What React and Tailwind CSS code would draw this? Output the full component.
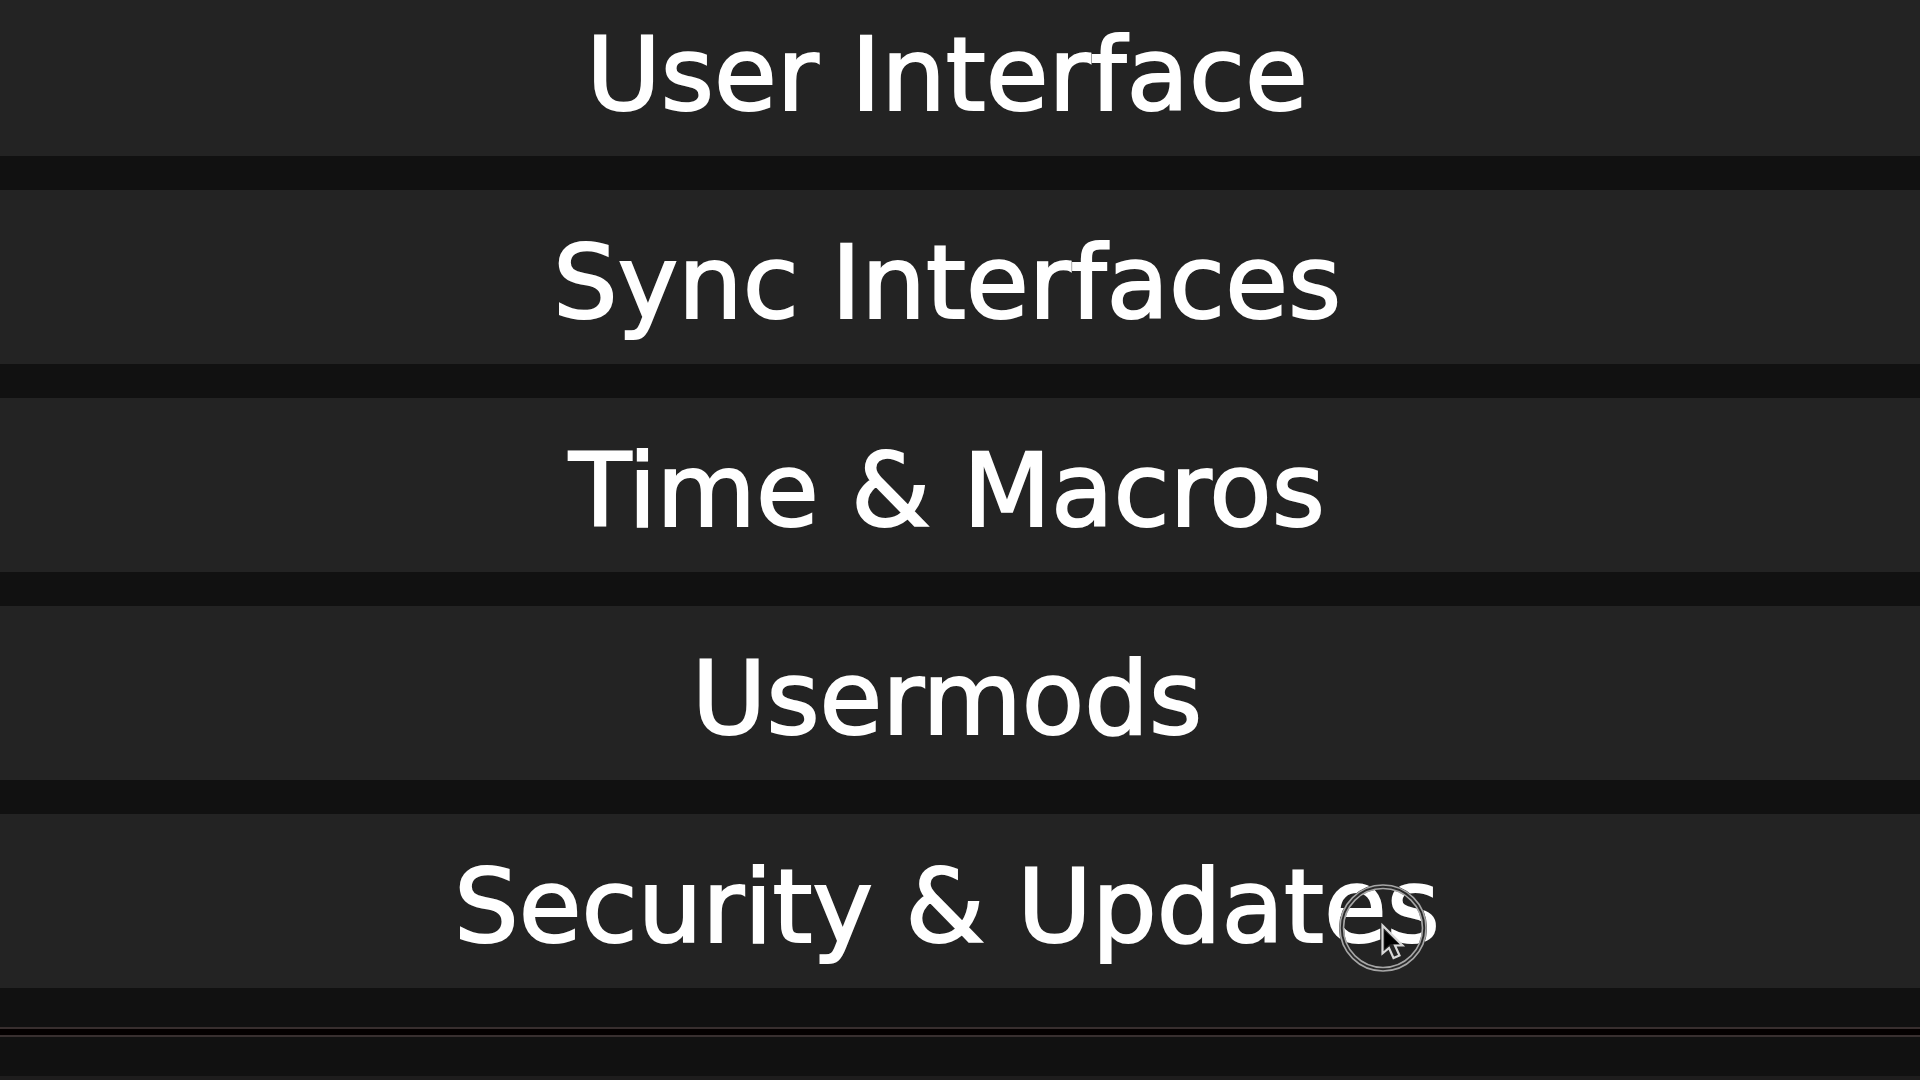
const items = [
  'User Interface',
  'Sync Interfaces',
  'Time & Macros',
  'Usermods',
  'Security & Updates',
];

function Pointer() {
  return (
    <svg
      className="pointer-events-none absolute left-[1337px] top-[882px] h-[92px] w-[92px]"
      viewBox="0 0 92 92"
      fill="none"
      aria-hidden="true"
    >
      <circle cx="46" cy="46" r="41.5" stroke="#2a2a2a" strokeWidth="5" />
      <circle cx="46" cy="46" r="43" stroke="#a6a6a6" strokeWidth="1.6" />
      <circle cx="46" cy="46" r="39.5" stroke="#a6a6a6" strokeWidth="1.6" />
      <path
        d="M45.5 43.5V71.5L52 66L56.5 76L62.5 73.5L58 63.5H65.5Z"
        fill="#242424"
        stroke="#d8d8d8"
        strokeWidth="2.2"
      />
      <path d="M47.5 49V67L52.5 62.5L55 62H62Z" fill="#000000" />
    </svg>
  );
}

export default function App() {
  return (
    <div className="relative flex h-screen flex-col overflow-hidden bg-[#111111] font-['Verdana','DejaVu_Sans',sans-serif] text-white">
      <nav className="-mt-[18px] flex shrink-0 flex-col gap-[34px]">
        {items.map((label) => (
          <button
            key={label}
            type="button"
            className="w-full cursor-default bg-[#232323] pt-[33px] pr-[26px] pb-[21px] text-center text-[102px] leading-[120px] whitespace-nowrap [-webkit-text-stroke:2px_white]"
          >
            {label}
          </button>
        ))}
      </nav>
      <div className="mt-[39px] h-[10px] shrink-0 border-y-2 border-[#382f2f] bg-[#040000]" />
      <div className="mt-[39px] flex-1 bg-[#1e1d1d]" />
      <Pointer />
    </div>
  );
}
